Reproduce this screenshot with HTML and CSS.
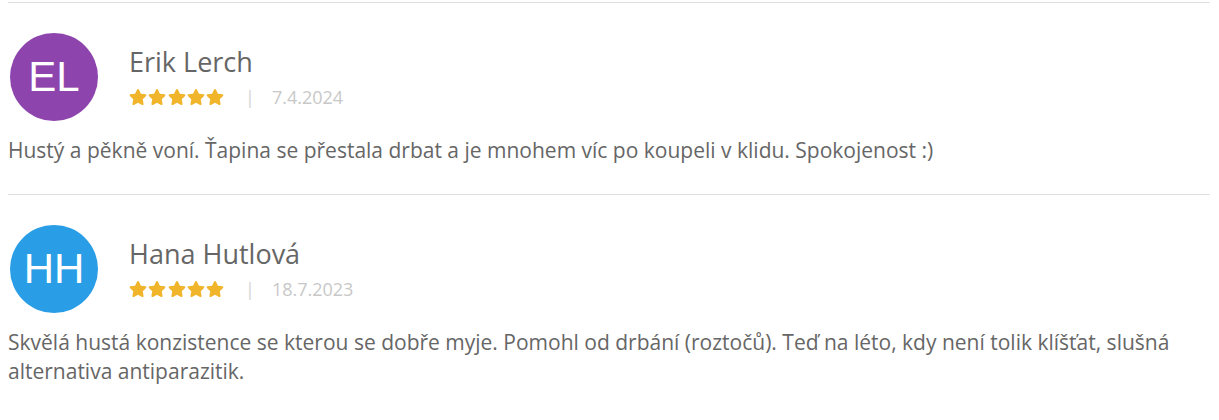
FILE: index.html
```html
<!DOCTYPE html>
<html lang="cs">
<head>
<meta charset="utf-8">
<link rel="stylesheet" href="styles.css">
</head>
<body>
<div class="reviews">
  <div class="review">
    <div class="review-head">
      <div class="avatar avatar-purple">EL</div>
      <div class="meta">
        <div class="name">Erik Lerch</div>
        <div class="info">
          <span class="stars">
            <svg viewBox="0 0 576 512"><path d="M259.3 17.8L194 150.2 47.9 171.5c-26.2 3.8-36.7 36.1-17.7 54.6l105.7 103-25 145.5c-4.5 26.3 23.2 46 46.4 33.7L288 439.6l130.7 68.7c23.2 12.2 50.9-7.4 46.4-33.7l-25-145.5 105.7-103c19-18.5 8.5-50.8-17.7-54.6L382 150.2 316.7 17.8c-11.7-23.6-45.6-23.9-57.4 0z"/></svg>
            <svg viewBox="0 0 576 512"><path d="M259.3 17.8L194 150.2 47.9 171.5c-26.2 3.8-36.7 36.1-17.7 54.6l105.7 103-25 145.5c-4.5 26.3 23.2 46 46.4 33.7L288 439.6l130.7 68.7c23.2 12.2 50.9-7.4 46.4-33.7l-25-145.5 105.7-103c19-18.5 8.5-50.8-17.7-54.6L382 150.2 316.7 17.8c-11.7-23.6-45.6-23.9-57.4 0z"/></svg>
            <svg viewBox="0 0 576 512"><path d="M259.3 17.8L194 150.2 47.9 171.5c-26.2 3.8-36.7 36.1-17.7 54.6l105.7 103-25 145.5c-4.5 26.3 23.2 46 46.4 33.7L288 439.6l130.7 68.7c23.2 12.2 50.9-7.4 46.4-33.7l-25-145.5 105.7-103c19-18.5 8.5-50.8-17.7-54.6L382 150.2 316.7 17.8c-11.7-23.6-45.6-23.9-57.4 0z"/></svg>
            <svg viewBox="0 0 576 512"><path d="M259.3 17.8L194 150.2 47.9 171.5c-26.2 3.8-36.7 36.1-17.7 54.6l105.7 103-25 145.5c-4.5 26.3 23.2 46 46.4 33.7L288 439.6l130.7 68.7c23.2 12.2 50.9-7.4 46.4-33.7l-25-145.5 105.7-103c19-18.5 8.5-50.8-17.7-54.6L382 150.2 316.7 17.8c-11.7-23.6-45.6-23.9-57.4 0z"/></svg>
            <svg viewBox="0 0 576 512"><path d="M259.3 17.8L194 150.2 47.9 171.5c-26.2 3.8-36.7 36.1-17.7 54.6l105.7 103-25 145.5c-4.5 26.3 23.2 46 46.4 33.7L288 439.6l130.7 68.7c23.2 12.2 50.9-7.4 46.4-33.7l-25-145.5 105.7-103c19-18.5 8.5-50.8-17.7-54.6L382 150.2 316.7 17.8c-11.7-23.6-45.6-23.9-57.4 0z"/></svg>
          </span>
          <span class="sep">|</span>
          <span class="date">7.4.2024</span>
        </div>
      </div>
    </div>
    <p class="text">Hustý a pěkně voní. Ťapina se přestala drbat a je mnohem víc po koupeli v klidu. Spokojenost :)</p>
  </div>
  <div class="review">
    <div class="review-head">
      <div class="avatar avatar-blue">HH</div>
      <div class="meta">
        <div class="name">Hana Hutlová</div>
        <div class="info">
          <span class="stars">
            <svg viewBox="0 0 576 512"><path d="M259.3 17.8L194 150.2 47.9 171.5c-26.2 3.8-36.7 36.1-17.7 54.6l105.7 103-25 145.5c-4.5 26.3 23.2 46 46.4 33.7L288 439.6l130.7 68.7c23.2 12.2 50.9-7.4 46.4-33.7l-25-145.5 105.7-103c19-18.5 8.5-50.8-17.7-54.6L382 150.2 316.7 17.8c-11.7-23.6-45.6-23.9-57.4 0z"/></svg>
            <svg viewBox="0 0 576 512"><path d="M259.3 17.8L194 150.2 47.9 171.5c-26.2 3.8-36.7 36.1-17.7 54.6l105.7 103-25 145.5c-4.5 26.3 23.2 46 46.4 33.7L288 439.6l130.7 68.7c23.2 12.2 50.9-7.4 46.4-33.7l-25-145.5 105.7-103c19-18.5 8.5-50.8-17.7-54.6L382 150.2 316.7 17.8c-11.7-23.6-45.6-23.9-57.4 0z"/></svg>
            <svg viewBox="0 0 576 512"><path d="M259.3 17.8L194 150.2 47.9 171.5c-26.2 3.8-36.7 36.1-17.7 54.6l105.7 103-25 145.5c-4.5 26.3 23.2 46 46.4 33.7L288 439.6l130.7 68.7c23.2 12.2 50.9-7.4 46.4-33.7l-25-145.5 105.7-103c19-18.5 8.5-50.8-17.7-54.6L382 150.2 316.7 17.8c-11.7-23.6-45.6-23.9-57.4 0z"/></svg>
            <svg viewBox="0 0 576 512"><path d="M259.3 17.8L194 150.2 47.9 171.5c-26.2 3.8-36.7 36.1-17.7 54.6l105.7 103-25 145.5c-4.5 26.3 23.2 46 46.4 33.7L288 439.6l130.7 68.7c23.2 12.2 50.9-7.4 46.4-33.7l-25-145.5 105.7-103c19-18.5 8.5-50.8-17.7-54.6L382 150.2 316.7 17.8c-11.7-23.6-45.6-23.9-57.4 0z"/></svg>
            <svg viewBox="0 0 576 512"><path d="M259.3 17.8L194 150.2 47.9 171.5c-26.2 3.8-36.7 36.1-17.7 54.6l105.7 103-25 145.5c-4.5 26.3 23.2 46 46.4 33.7L288 439.6l130.7 68.7c23.2 12.2 50.9-7.4 46.4-33.7l-25-145.5 105.7-103c19-18.5 8.5-50.8-17.7-54.6L382 150.2 316.7 17.8c-11.7-23.6-45.6-23.9-57.4 0z"/></svg>
          </span>
          <span class="sep">|</span>
          <span class="date">18.7.2023</span>
        </div>
      </div>
    </div>
    <p class="text">Skvělá hustá konzistence se kterou se dobře myje. Pomohl od drbání (roztočů). Teď na léto, kdy není tolik klíšťat, slušná alternativa antiparazitik.</p>
  </div>
</div>
</body>
</html>
```

FILE: styles.css
```css
html, body {
  margin: 0;
  padding: 0;
  background: #fff;
}
body {
  padding: 2px 9px 0 8px;
  font-family: "Open Sans", "Liberation Sans", sans-serif;
  color: #666;
}
.review {
  border-top: 1px solid #e0e0e0;
  padding-top: 30px;
}
.review-head {
  display: flex;
  align-items: center;
  padding-left: 2px;
}
.avatar {
  width: 88px;
  height: 88px;
  border-radius: 50%;
  display: flex;
  align-items: center;
  justify-content: center;
  color: #fff;
  font-family: "Liberation Sans", Arial, sans-serif;
  font-size: 42px;
  flex-shrink: 0;
}
.avatar-purple { background: #8e44ad; }
.avatar-blue { background: #299de6; }
.meta {
  margin-left: 31px;
  display: flex;
  flex-direction: column;
  gap: 7px;
}
.name {
  font-size: 27px;
  line-height: 32px;
  color: #666;
}
.info {
  display: flex;
  align-items: center;
  height: 24px;
}
.stars {
  display: flex;
  gap: 1.25px;
}
.stars svg {
  width: 18px;
  height: 16px;
  fill: #f0b52b;
}
.sep {
  color: #d5d5d5;
  font-size: 18px;
  line-height: 24px;
  margin-left: 21px;
}
.date {
  color: #c8c8c8;
  font-size: 18px;
  line-height: 24px;
  margin-left: 17px;
}
.text {
  margin: 15px 0 29px;
  font-size: 21px;
  line-height: 29px;
  color: #666;
}
```
